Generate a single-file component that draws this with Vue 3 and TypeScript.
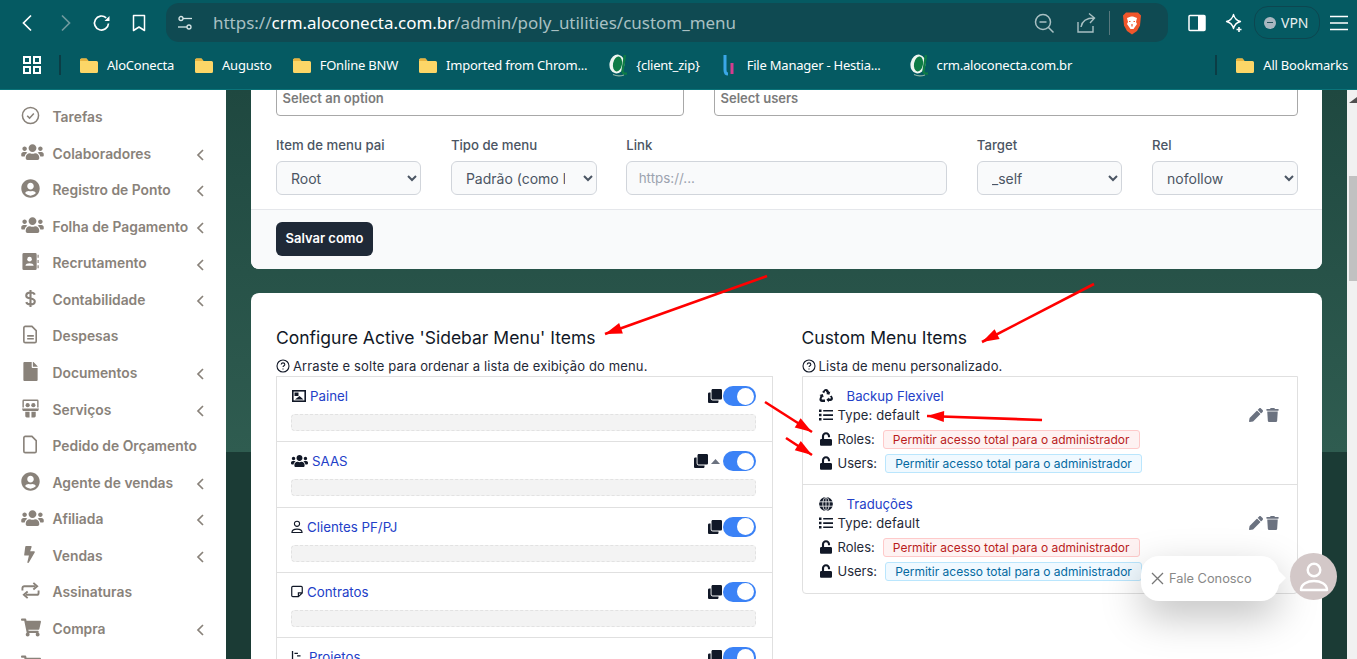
<script setup lang="ts">
type Nav = { label: string; icon: string; sub?: boolean };
const navItems: Nav[] = [
  { label: 'Tarefas', icon: 'check' },
  { label: 'Colaboradores', icon: 'users', sub: true },
  { label: 'Registro de Ponto', icon: 'ucircle', sub: true },
  { label: 'Folha de Pagamento', icon: 'users', sub: true },
  { label: 'Recrutamento', icon: 'abook', sub: true },
  { label: 'Contabilidade', icon: 'dollar', sub: true },
  { label: 'Despesas', icon: 'filealt' },
  { label: 'Documentos', icon: 'file', sub: true },
  { label: 'Serviços', icon: 'gift', sub: true },
  { label: 'Pedido de Orçamento', icon: 'fileo' },
  { label: 'Agente de vendas', icon: 'ucircle', sub: true },
  { label: 'Afiliada', icon: 'users', sub: true },
  { label: 'Vendas', icon: 'bolt', sub: true },
  { label: 'Assinaturas', icon: 'retweet' },
  { label: 'Compra', icon: 'cart', sub: true },
  { label: '', icon: 'cart' },
];

const P: Record<string, string> = {
  users: 'M96 224c35.3 0 64-28.7 64-64s-28.7-64-64-64-64 28.7-64 64 28.7 64 64 64zm448 0c35.3 0 64-28.7 64-64s-28.7-64-64-64-64 28.7-64 64 28.7 64 64 64zm32 32h-64c-17.6 0-33.5 7.1-45.1 18.6 40.3 22.1 68.9 62 75.1 109.4h66c17.7 0 32-14.3 32-32v-32c0-35.3-28.7-64-64-64zm-256 0c61.9 0 112-50.1 112-112S381.9 32 320 32 208 82.1 208 144s50.1 112 112 112zm76.8 32h-8.3c-20.8 10-43.9 16-68.5 16s-47.6-6-68.5-16h-8.3C179.6 288 128 339.6 128 403.2V432c0 26.5 21.5 48 48 48h288c26.5 0 48-21.5 48-48v-28.8c0-63.6-51.6-115.2-115.2-115.2zm-223.7-13.4C161.5 263.1 145.6 256 128 256H64c-35.3 0-64 28.7-64 64v32c0 17.7 14.3 32 32 32h65.9c6.3-47.4 34.9-87.3 75.2-109.4z',
  ucircle: 'M248 8C111 8 0 119 0 256s111 248 248 248 248-111 248-248S385 8 248 8zm0 96c48.6 0 88 39.4 88 88s-39.4 88-88 88-88-39.4-88-88 39.4-88 88-88zm0 344c-58.7 0-111.3-26.6-146.5-68.2 18.8-35.4 55.6-59.8 98.5-59.8 2.4 0 4.8.4 7.1 1.1 13 4.2 26.6 6.9 40.9 6.9 14.3 0 28-2.7 40.9-6.9 2.3-.7 4.7-1.1 7.1-1.1 42.9 0 79.7 24.4 98.5 59.8C359.3 421.4 306.7 448 248 448z',
  cart: 'M528.12 301.319l47.273-208C578.806 78.301 567.391 64 551.99 64H159.208l-9.166-44.81C147.758 8.021 137.93 0 126.529 0H24C10.745 0 0 10.745 0 24v16c0 13.255 10.745 24 24 24h69.883l70.248 343.435C147.325 417.1 136 435.222 136 456c0 30.928 25.072 56 56 56s56-25.072 56-56c0-15.674-6.447-29.835-16.824-40h209.647C430.447 426.165 424 440.326 424 456c0 30.928 25.072 56 56 56s56-25.072 56-56c0-22.172-12.888-41.332-31.579-50.405l5.517-24.276c3.413-15.018-8.002-29.319-23.403-29.319H218.117l-6.545-32h293.145c11.206 0 20.92-7.754 23.403-18.681z',
  bolt: 'M296 160H180.6l42.6-129.8C227.2 15 215.7 0 200 0H56C44 0 33.800 8.900 32.200 20.800l-32 240C-1.700 275.200 9.500 288 24 288h118.700L96.600 482.500c-3.600 15.200 8 29.500 23.300 29.500 8.400 0 16.400-4.400 20.800-12l176-304c9.300-15.900-2.200-36-20.700-36z',
  file: 'M224 136V0H24C10.700 0 0 10.700 0 24v464c0 13.300 10.700 24 24 24h336c13.300 0 24-10.700 24-24V160H248c-13.200 0-24-10.800-24-24zm160-14.100v6.100H256V0h6.100c6.400 0 12.500 2.500 17 7l97.900 98c4.500 4.500 7 10.600 7 16.900z',
  trash: 'M432 32H312l-9.400-18.700A24 24 0 0 0 281.100 0H166.800a23.720 23.720 0 0 0-21.400 13.300L136 32H16A16 16 0 0 0 0 48v32a16 16 0 0 0 16 16h416a16 16 0 0 0 16-16V48a16 16 0 0 0-16-16zM53.200 467a48 48 0 0 0 47.900 45h245.800a48 48 0 0 0 47.900-45L416 128H32z',
  pencil: 'M497.900 142.100l-46.100 46.100c-4.700 4.700-12.300 4.700-17 0l-111-111c-4.700-4.700-4.700-12.300 0-17l46.100-46.100c18.700-18.700 49.100-18.700 67.900 0l60.100 60.100c18.800 18.700 18.800 49.100 0 67.900zM284.200 99.800L21.600 362.400.4 483.900c-2.900 16.400 11.400 30.600 27.800 27.800l121.500-21.300 262.600-262.600c4.700-4.700 4.700-12.300 0-17l-111-111c-4.800-4.700-12.400-4.700-17.100 0z',
  unlock: 'M400 256H152V152.900c0-39.600 31.700-72.500 71.300-72.900 40-.4 72.700 32.100 72.700 72v16c0 13.300 10.700 24 24 24h32c13.300 0 24-10.700 24-24v-16C376 68 307.500-.3 223.500 0 139.500.3 72 69.500 72 153.500V256H48c-26.500 0-48 21.500-48 48v160c0 26.500 21.500 48 48 48h352c26.500 0 48-21.500 48-48V304c0-26.500-21.500-48-48-48z',
  clone: 'M464 0c26.510 0 48 21.490 48 48v288c0 26.510-21.490 48-48 48H176c-26.510 0-48-21.490-48-48V48c0-26.510 21.490-48 48-48h288M176 416c-44.112 0-80-35.888-80-80V128H48c-26.510 0-48 21.490-48 48v288c0 26.510 21.490 48 48 48h288c26.510 0 48-21.490 48-48v-48H176z',
};
const VB: Record<string, string> = {
  users: '0 0 640 512', ucircle: '0 0 496 512', cart: '0 0 576 512', bolt: '0 0 320 512', file: '0 0 384 512',
};

const folders = [
  { t: 'AloConecta', k: 'folder' },
  { t: 'Augusto', k: 'folder' },
  { t: 'FOnline BNW', k: 'folder' },
  { t: 'Imported from Chrom...', k: 'folder' },
  { t: '{client_zip}', k: 'alo' },
  { t: 'File Manager - Hestia...', k: 'hestia' },
  { t: 'crm.aloconecta.com.br', k: 'alo' },
];

const activeRows = [
  { t: 'Painel', i: 'image', extra: false },
  { t: 'SAAS', i: 'users', extra: true },
  { t: 'Clientes PF/PJ', i: 'user', extra: false },
  { t: 'Contratos', i: 'note', extra: false },
  { t: 'Projetos', i: 'tasks', extra: false },
];
const customRows = [
  { t: 'Backup Flexivel', i: 'recycle' },
  { t: 'Traduções', i: 'globe' },
];

const arrows = [
  [767, 276, 605, 334],
  [1094, 284, 982, 342],
  [765, 402, 812, 432],
  [786, 438, 812, 455],
  [1042, 420, 927, 416],
];
function head(a: number[]): string {
  const [x1, y1, x2, y2] = a;
  const d = Math.hypot(x2 - x1, y2 - y1);
  const ux = (x2 - x1) / d;
  const uy = (y2 - y1) / d;
  const bx = x2 - ux * 17;
  const by = y2 - uy * 17;
  return `${x2},${y2} ${bx - uy * 5.5},${by + ux * 5.5} ${bx + uy * 5.5},${by - ux * 5.5}`;
}
</script>

<template>
  <div class="window">
    <header class="chrome">
      <div class="toolbar">
        <button class="tb"><svg width="20" height="20" viewBox="0 0 20 20" fill="none" stroke="#fff" stroke-width="1.7"><path d="M13 2.500 5.500 10l7.500 7.500" /></svg></button>
        <button class="tb"><svg width="20" height="20" viewBox="0 0 20 20" fill="none" stroke="#6f9a9e" stroke-width="1.7"><path d="M7 2.500 14.500 10 7 17.500" /></svg></button>
        <button class="tb"><svg width="20" height="20" viewBox="0 0 20 20" fill="none" stroke="#fff" stroke-width="1.700"><path d="M16.500 10.500a7 7 0 1 1-2.300-5.700" /><path d="M17.500 3v5h-5z" fill="#fff" stroke="none" /></svg></button>
        <button class="tb"><svg width="20" height="20" viewBox="0 0 20 20" fill="none" stroke="#fff" stroke-width="1.500"><path d="M4.500 2.500h11v15L10 14l-5.500 3.500z" stroke-linejoin="round" /></svg></button>
        <div class="omni">
          <svg class="tune" width="18" height="18" viewBox="0 0 18 18" fill="none" stroke="#d7e6e7" stroke-width="1.300"><circle cx="5" cy="4.500" r="2" /><path d="M7 4.500h9" /><circle cx="13" cy="13" r="2" /><path d="M2 13h9" /></svg>
          <div class="url">https://<b>crm.aloconecta.com.br</b>/admin/poly_utilities/custom_menu</div>
          <svg width="22" height="22" viewBox="0 0 22 22" fill="none" stroke="#a9c0c3" stroke-width="1.500"><circle cx="10" cy="10" r="7.500" /><path d="M6.500 10h7M15.500 15.500l5 5" /></svg>
          <svg class="share" width="22" height="22" viewBox="0 0 22 22" fill="none" stroke="#a9c0c3" stroke-width="1.400"><path d="M3 10v10h15v-6M6 15c1-6 5-9 13-9M14 1.500 19.500 6 15 11" /></svg>
          <span class="osep"></span>
          <svg width="20" height="24" viewBox="0 0 20 24"><path d="M4 1.500h12l3 3-1 10-3 5.500-5 3.500L5 20l-3-5.500-1-10z" fill="#f0562b" /><path d="M5 7l4-1.500h2L15 7l-1 4 1 2-3.500 5h-3L5 13l1-2z" fill="#fff" /><path d="M8.500 10.500h-1.500M13 10.500h-1.500M10 13v2.500" stroke="#f0562b" stroke-width="1.200" /></svg>
        </div>
        <svg class="panel" width="20" height="20" viewBox="0 0 20 20"><rect x="2" y="2.500" width="16" height="15" rx="1" fill="none" stroke="#fff" stroke-width="1.500" /><rect x="11" y="3" width="7" height="14" fill="#fff" /></svg>
        <svg class="stars" width="22" height="22" viewBox="0 0 22 22" fill="none" stroke="#fff" stroke-width="1.300"><path d="M9.500 2.500c1 4 3 6 7 7-4 1-6 3-7 7-1-4-3-6-7-7 4-1 6-3 7-7z" stroke-linejoin="round" /><path d="M15 15v5M12.500 17.500h5" stroke-width="1.600" /></svg>
        <div class="vpn"><span class="vdot"><i></i></span>VPN</div>
        <svg class="burger" width="20" height="16" viewBox="0 0 20 16" fill="none" stroke="#fff" stroke-width="1.400"><path d="M1 1.500h18M1 8h18M1 14.500h18" /></svg>
      </div>
      <div class="bookmarks">
        <svg class="apps" width="18" height="18" viewBox="0 0 18 18" fill="none" stroke="#fff" stroke-width="2"><rect x="1" y="1" width="6" height="6" /><rect x="11" y="1" width="6" height="6" /><rect x="1" y="11" width="6" height="6" /><rect x="11" y="11" width="6" height="6" /></svg>
        <span class="bsep"></span>
        <div v-for="f in folders" :key="f.t" class="bm" :class="'k-' + f.k">
          <svg v-if="f.k === 'folder'" width="20" height="17" viewBox="0 0 20 17"><path d="M1 3a1.500 1.500 0 0 1 1.500-1.500h5L9.500 4h8A1.500 1.500 0 0 1 19 5.500v9a1.500 1.500 0 0 1-1.500 1.500h-15A1.500 1.500 0 0 1 1 14.500z" fill="#fcd667" /><path d="M1 3a1.500 1.500 0 0 1 1.500-1.500h5L9.500 4 H1z" fill="#e8b33f" /></svg>
          <svg v-else-if="f.k === 'alo'" width="20" height="24" viewBox="0 0 20 24" fill="none"><ellipse cx="9" cy="11" rx="7.500" ry="9.500" fill="#eef6f0" transform="rotate(10 9 11)" /><ellipse cx="9.500" cy="11" rx="4.500" ry="7.500" fill="#0e7c45" transform="rotate(10 9.500 11)" /><path d="M17 2 14.500 18c0 2 1.500 3 4.500 2.500" stroke="#0e7c45" stroke-width="2.400" /><path d="M5 21.500c3 1.500 8 1.500 11 .5" stroke="#8fb5a5" stroke-width="1.200" /></svg>
          <svg v-else width="14" height="22" viewBox="0 0 14 22" fill="none"><path d="M3 1v15c0 3 1 4 3 4" stroke="#3aa7e8" stroke-width="3" /><path d="M10 9v11" stroke="#d63c8e" stroke-width="3" /></svg>
          <span>{{ f.t }}</span>
        </div>
        <span class="bsep end"></span>
        <div class="bm">
          <svg width="20" height="17" viewBox="0 0 20 17"><path d="M1 3a1.500 1.500 0 0 1 1.500-1.500h5L9.500 4h8A1.500 1.500 0 0 1 19 5.500v9a1.500 1.500 0 0 1-1.500 1.500h-15A1.500 1.500 0 0 1 1 14.500z" fill="#fcd667" /><path d="M1 3a1.500 1.500 0 0 1 1.500-1.500h5L9.500 4 H1z" fill="#e8b33f" /></svg>
          <span>All Bookmarks</span>
        </div>
      </div>
    </header>

    <div class="page">
      <aside class="sidebar">
        <div v-for="(n, i) in navItems" :key="i" class="nav">
          <span class="nicon">
            <svg v-if="P[n.icon]" :viewBox="VB[n.icon]" class="nsvg" :class="'s-' + n.icon"><path :d="P[n.icon]" fill="currentColor" /></svg>
            <svg v-else-if="n.icon === 'check'" class="nsvg s-line" viewBox="0 0 20 20" fill="none" stroke="currentColor" stroke-width="1.600"><circle cx="10" cy="10" r="8.500" /><path d="M6.500 10.300 9 12.800l4.500-5" /></svg>
            <svg v-else-if="n.icon === 'abook'" class="nsvg s-line" viewBox="0 0 20 20"><path d="M3 1h12a1.500 1.500 0 0 1 1.500 1.500v15A1.500 1.500 0 0 1 15 19H3a1.500 1.500 0 0 1-1.500-1.500v-15A1.500 1.500 0 0 1 3 1z" fill="currentColor" /><circle cx="9" cy="7.500" r="2.400" fill="#fff" /><path d="M4.800 14c0-3 8.400-3 8.400 0v.5H4.800z" fill="#fff" /><path d="M18 3v3M18 8.500v3M18 14v3" stroke="currentColor" stroke-width="1.200" /></svg>
            <svg v-else-if="n.icon === 'dollar'" class="nsvg s-line" viewBox="0 0 20 20" fill="none" stroke="currentColor" stroke-width="2.200"><path d="M14.500 6c-.5-1.500-2-2.300-4.500-2.300S5.500 4.800 5.500 7s2 2.600 4.500 3 4.500 1 4.500 3.200-2 3.100-4.500 3.100-4-.9-4.500-2.400M10 1v18" /></svg>
            <svg v-else-if="n.icon === 'filealt'" class="nsvg s-line" viewBox="0 0 20 20" fill="none" stroke="currentColor" stroke-width="1.700"><path d="M4.500 1.500h7l4.500 4.500v11a1.500 1.500 0 0 1-1.500 1.500h-10A1.500 1.500 0 0 1 3 17V3a1.500 1.500 0 0 1 1.500-1.500z" /><path d="M6.500 11.500h7M6.500 14.500h7" /></svg>
            <svg v-else-if="n.icon === 'fileo'" class="nsvg s-line" viewBox="0 0 20 20" fill="none" stroke="currentColor" stroke-width="1.700"><path d="M4.500 1.500h7l4.500 4.500v11a1.500 1.500 0 0 1-1.500 1.500h-10A1.500 1.500 0 0 1 3 17V3a1.500 1.500 0 0 1 1.500-1.500z" /></svg>
            <svg v-else-if="n.icon === 'gift'" class="nsvg s-line" viewBox="0 0 20 20"><path d="M3 .5h14a1.500 1.500 0 0 1 1.500 1.500v7h-1.500V2H3v7H1.500V2A1.500 1.500 0 0 1 3 .5z" fill="currentColor" /><circle cx="7" cy="6.500" r="2.200" fill="currentColor" /><circle cx="13" cy="6.500" r="2.200" fill="currentColor" /><path d="M1 10h18l-1 2.500H2zM4.500 13.500h4.500v6H6a1.500 1.500 0 0 1-1.500-1.500zM11 13.500h4.500V18a1.500 1.500 0 0 1-1.500 1.500h-3z" fill="currentColor" /></svg>
            <svg v-else-if="n.icon === 'retweet'" class="nsvg s-line" viewBox="0 0 20 20" fill="none" stroke="currentColor" stroke-width="2"><path d="M1.500 10V7.500a2 2 0 0 1 2-2H15" /><path d="M13 2l4 3.500-4 3.500" /><path d="M18.500 10v2.500a2 2 0 0 1-2 2H5" /><path d="M7 11l-4 3.500L7 18" /></svg>
          </span>
          <span class="nlabel">{{ n.label }}</span>
          <svg v-if="n.sub" class="chev" width="8" height="12" viewBox="0 0 8 12" fill="none" stroke="currentColor" stroke-width="1.700"><path d="M7 1 2 6l5 5" /></svg>
        </div>
      </aside>

      <main class="main">
        <section class="card first">
          <div class="body">
            <div class="pair">
              <div class="multi">Select an option</div>
              <div class="multi">Select users</div>
            </div>
            <div class="fields">
              <label class="field"><span>Item de menu pai</span><select><option>Root</option></select></label>
              <label class="field"><span>Tipo de menu</span><select class="cut"><option>Padrão (como link)</option></select></label>
              <label class="field"><span>Link</span><input placeholder="https://..." /></label>
              <label class="field"><span>Target</span><select><option>_self</option></select></label>
              <label class="field"><span>Rel</span><select><option>nofollow</option></select></label>
            </div>
          </div>
          <div class="foot"><button class="save">Salvar como</button></div>
        </section>

        <section class="card second">
          <div class="cols">
            <div>
              <h2>Configure Active 'Sidebar Menu' Items</h2>
              <p class="note"><svg width="14" height="14" viewBox="0 0 14 14" fill="none" stroke="#111827" stroke-width="1.100"><circle cx="7" cy="7" r="6" /><path d="M5.200 5.500C5.300 4.400 6 3.900 7 3.900s1.800.6 1.800 1.500c0 1.300-1.800 1.300-1.800 2.700" /><path d="M7 9.400v1" /></svg>Arraste e solte para ordenar a lista de exibição do menu.</p>
              <div class="list">
                <div v-for="r in activeRows" :key="r.t" class="arow">
                  <div class="ahead">
                    <span class="title">
                      <svg v-if="r.i === 'image'" class="tight-r" width="14" height="12" viewBox="0 0 14 12"><rect x=".8" y=".8" width="12.400" height="10.400" fill="none" stroke="#111827" stroke-width="1.600" /><path d="M2.500 2.500h4v3.500h-4zM3 9.500 7.500 6l4 3.500z" fill="#111827" /></svg>
                      <svg v-else-if="r.i === 'users'" width="17" height="14" viewBox="0 0 640 512" class="tight-i"><path :d="P.users" fill="#111827" /></svg>
                      <svg v-else-if="r.i === 'user'" width="12" height="14" viewBox="0 0 13 14" fill="none" stroke="#111827" stroke-width="1.200" class="tight-i"><circle cx="6.500" cy="3.500" r="2.800" /><path d="M1 13c0-5 11-5 11 0z" /></svg>
                      <svg v-else-if="r.i === 'note'" width="12" height="13" viewBox="0 0 13 13" fill="none" stroke="#111827" stroke-width="1.300" class="tight-i"><path d="M2 1h9a1.200 1.200 0 0 1 1.200 1.200V8L8 12H2A1.200 1.200 0 0 1 .8 10.800V2.200A1.200 1.200 0 0 1 2 1zM8 12V8h4" /></svg>
                      <svg v-else width="13" height="14" viewBox="0 0 15 14" fill="#111827" class="tight-l"><path d="M1 0h1.500v12H13v1.500H1zM4 2h4v1.500H4zM7 5h4v1.500H7z" /></svg>
                      <a>{{ r.t }}</a>
                    </span>
                    <span class="tools">
                      <svg width="14" height="14" viewBox="0 0 512 512"><path :d="P.clone" fill="#111827" /></svg>
                      <svg v-if="r.extra" class="caret" width="9" height="5" viewBox="0 0 9 5"><path d="M4.500 0 9 5H0z" fill="#6b7280" /></svg>
                      <span class="toggle"><i></i></span>
                    </span>
                  </div>
                  <div class="drop"></div>
                </div>
              </div>
            </div>
            <div>
              <h2>Custom Menu Items</h2>
              <p class="note"><svg width="14" height="14" viewBox="0 0 14 14" fill="none" stroke="#111827" stroke-width="1.100"><circle cx="7" cy="7" r="6" /><path d="M5.200 5.500C5.300 4.400 6 3.900 7 3.900s1.800.6 1.800 1.500c0 1.300-1.800 1.300-1.800 2.700" /><path d="M7 9.400v1" /></svg><span>Lista de menu personalizado.</span></p>
              <div class="list custom">
                <div v-for="r in customRows" :key="r.t" class="crow">
                  <div class="cmain">
                    <div class="ctitle">
                      <svg v-if="r.i === 'recycle'" width="14" height="14" viewBox="0 0 14 14" fill="#111827"><path d="M4.800 1.200C5.300.4 6 0 7 0s1.700.4 2.200 1.200l1.100 1.900 1-.6-.9 3.300-3.300-.9 1-.6-1.100-1.900c-.3-.6-.7-.6-1 0L5.200 4.300 3.100 3z" /><path d="M12.600 6.500l1 1.800c.9 1.700-.2 3.700-2.200 3.700H9.800v1.200L7.400 10.800l2.400-2.400v1.200h1.600c.5 0 .8-.5.500-1L10.600 7.700z" /><path d="M1.500 6.700.5 5.900l3.300-.9.900 3.300-1-.6-1 1.700c-.3.500 0 1.100.6 1.100H6v2.400H3c-2 0-3.200-2.100-2.200-3.800z" /></svg>
                      <svg v-else width="14" height="14" viewBox="0 0 14 14" fill="#111827"><circle cx="7" cy="7" r="6.900" /><path d="M0 4.800h14M0 9.200h14M7 0v14" stroke="#fff" stroke-width=".8" /><ellipse cx="7" cy="7" rx="3.200" ry="6.900" fill="none" stroke="#fff" stroke-width=".8" /></svg>
                      <a>{{ r.t }}</a>
                    </div>
                    <div class="cline type">
                      <svg width="14" height="12" viewBox="0 0 14 12" fill="#111827"><path d="M0 .5h2.500V3H0zM0 4.800h2.500v2.500H0zM0 9h2.500v2.500H0zM4.200 1h9.800v1.600H4.200zM4.200 5.300h9.800v1.600H4.200zM4.200 9.500h9.800v1.600H4.200z" /></svg>
                      <span>Type: default</span>
                    </div>
                    <div class="cline">
                      <svg class="lock" width="12" height="14" viewBox="0 0 448 512"><path :d="P.unlock" fill="#111827" /></svg>
                      <span>Roles:</span><em class="badge red">Permitir acesso total para o administrador</em>
                    </div>
                    <div class="cline">
                      <svg class="lock" width="12" height="14" viewBox="0 0 448 512"><path :d="P.unlock" fill="#111827" /></svg>
                      <span>Users:</span><em class="badge blue">Permitir acesso total para o administrador</em>
                    </div>
                  </div>
                  <div class="acts">
                    <svg width="14" height="14" viewBox="0 0 512 512"><path :d="P.pencil" fill="#6b7280" /></svg>
                    <svg width="13" height="14" viewBox="0 0 448 512"><path :d="P.trash" fill="#6b7280" /></svg>
                  </div>
                </div>
              </div>
            </div>
          </div>
        </section>
      </main>

      <div class="scrollbar">
        <svg width="8" height="6" viewBox="0 0 8 6"><path d="M8 0v6H0z" fill="#505050" /></svg>
        <span class="thumb"></span>
      </div>

      <div class="chat">
        <div class="pill">
          <svg width="13" height="13" viewBox="0 0 13 13" fill="none" stroke="#777" stroke-width="1.300"><path d="M1 1l11 11M12 1 1 12" /></svg>
          <span>Fale Conosco</span>
        </div>
        <span class="tip"></span>
        <div class="avatar">
          <svg width="30" height="32" viewBox="0 0 30 32" fill="none" stroke="#fff" stroke-width="2.400"><circle cx="15" cy="9" r="6.300" /><path d="M2 29c0-12 26-12 26 0z" stroke-linejoin="round" /></svg>
        </div>
      </div>
    </div>

    <svg class="marks" width="1357" height="659" viewBox="0 0 1357 659">
      <g v-for="(a, i) in arrows" :key="i">
        <line :x1="a[0]" :y1="a[1]" :x2="a[2]" :y2="a[3]" stroke="#f00" stroke-width="2.600" />
        <polygon :points="head(a)" fill="#f00" />
      </g>
    </svg>
  </div>
</template>

<style>
html, body { margin: 0; padding: 0; overflow: hidden; }
</style>

<style scoped>
.window { position: relative; width: 1357px; height: 659px; overflow: hidden; display: flex; flex-direction: column; font-family: Inter, "Liberation Sans", sans-serif; background: #fff; }
.chrome { height: 90px; flex: none; background: #055a62; border-bottom: 1px solid #0a7379; box-sizing: border-box; font-family: "Noto Sans", "Open Sans", sans-serif; color: #fff; }
.toolbar { height: 45px; display: flex; align-items: center; padding-left: 9px; }
.tb { width: 37px; height: 37px; background: none; border: 0; padding: 0; display: flex; align-items: center; justify-content: center; }
.omni { width: 1002px; height: 39px; margin-left: 9px; border-radius: 13px; background: #0f4a52; display: flex; align-items: center; padding: 0 26px 0 10px; box-sizing: border-box; }
.tune { margin-right: 19px; }
.url { flex: 1; font-size: 16.980px; color: #a9c0c3; white-space: nowrap; }
.url b { font-weight: 400; color: #fff; }
.share { margin-left: 20px; }
.osep { width: 1px; height: 24px; background: #58787d; margin: 0 12px; }
.panel { margin-left: 19px; }
.stars { margin-left: 17px; }
.vpn { margin-left: 8px; width: 66px; height: 33px; box-sizing: border-box; border: 1px solid #0d4650; border-radius: 14px; display: flex; align-items: center; gap: 5px; padding-left: 9px; font-size: 14px; color: #e8f0f0; }
.vdot { width: 12px; height: 12px; border-radius: 50%; background: #a9b7c0; display: flex; align-items: center; justify-content: center; }
.vdot i { width: 6px; height: 1.500px; background: #22525a; }
.burger { margin-left: 9px; }
.bookmarks { height: 40px; display: flex; align-items: center; padding-left: 23px; font-size: 13px; }
.apps { flex: none; }
.bsep { width: 2px; height: 20px; background: #0b3d45; margin: 0 18px; flex: none; }
.bsep.end { margin: 0 18px 0 auto; }
.bm { display: flex; align-items: center; gap: 8px; margin-right: 20px; letter-spacing: -.22px; white-space: nowrap; color: #fff; }
.bm:last-child { margin-right: 9px; }
.k-alo { margin-left: 1px; }
.k-hestia { margin-left: 2px; margin-right: 27px; gap: 11px; }

.page { position: relative; flex: 1; display: flex; min-height: 0; }
.sidebar { width: 226px; flex: none; overflow: hidden; background: #fff; padding-top: 8.800px; box-sizing: border-box; }
.nav { height: 36.570px; display: flex; align-items: center; padding: 0 21px; color: #89827a; position: relative; font-size: 13.850px; font-weight: 600; }
.nicon { width: 31.500px; flex: none; display: flex; margin-top: -3px; }
.nsvg { height: 19px; width: 19px; }
.s-users { width: 23px; height: 18px; }
.s-cart { width: 20px; height: 19px; }
.s-bolt { height: 17px; width: 17px; }
.s-file { height: 19px; width: 15px; margin-left: 2px; }
.nlabel { white-space: nowrap; }
.chev { position: absolute; left: 196px; top: 13.500px; }

.main { flex: 1; min-width: 0; padding: 0 25px; overflow: hidden; background: linear-gradient(#1f4840 0, #2f5c50 362px, #1b3b35 362px); }
.card { background: #fff; border-radius: 8px; box-sizing: border-box; }
.first { border-radius: 0 0 8px 8px; overflow: hidden; }
.body { padding: 0 24px 14px 25px; }
.pair { display: grid; grid-template-columns: 408px 584px; gap: 30px; margin-bottom: 20px; }
.multi { height: 36px; margin-top: -10px; border: 1px solid #a8a8a8; border-radius: 4px; box-sizing: border-box; padding: 8.500px 5.500px 0; font-size: 13px; line-height: 16px; font-weight: 600; color: #7b7b7b; }
.fields { display: grid; grid-template-columns: 145.300px 145.700px 321px 145.700px 145.700px; gap: 29.600px; }
.field { display: flex; flex-direction: column; gap: 7px; min-width: 0; }
.field span { font-size: 13.200px; line-height: 18px; font-weight: 500; color: #4b5563; }
select, input { width: 100%; height: 34px; box-sizing: border-box; border: 1px solid #d1d5db; border-radius: 6px; background: #f9fafb; font: 400 14px Inter, sans-serif; color: #4b5563; padding: 0 4px 0 10px; outline: 0; }
select.cut { padding-right: 15px; }
input { font-size: 13.400px; padding-left: 11.500px; }
input::placeholder { color: #9ca3af; }
.foot { height: 60px; box-sizing: border-box; border-top: 1px solid #e5e7eb; background: #f9fafb; padding: 12px 25px; }
.save { width: 97px; height: 34px; border: 0; border-radius: 6px; background: #1f2937; color: #fff; font: 600 13px Inter, sans-serif; padding: 0 0 2px; }
.second { margin-top: 24px; padding: 34px 24px 0 25px; min-height: 400px; }
.cols { display: grid; grid-template-columns: 1fr 1fr; gap: 29px; }
h2 { margin: 0; font-size: 17.500px; line-height: 22px; font-weight: 400; color: #111827; }
.note { margin: 8px 0 1px; height: 18px; display: flex; align-items: center; gap: 3px; font-size: 13px; letter-spacing: .135px; color: #1f2937; white-space: nowrap; }
.list { border: 1px solid #e0e0e0; box-sizing: border-box; }
.arow { height: 65.250px; box-sizing: border-box; padding: 9px 16px 0 14px; border-bottom: 1px solid #e0e0e0; }
.ahead { height: 20px; display: flex; justify-content: space-between; align-items: center; }
.title { display: flex; align-items: center; gap: 5px; font-size: 13.300px; padding-left: 1px; }
.tight-i { margin: 0 -1px; }
.tight-l { margin-left: -1px; }
.tight-r { margin-right: -1px; }
a { color: #2340c8; }
.tools { display: flex; align-items: center; gap: 1px; }
.caret { margin: 0 2px; }
.toggle { width: 33px; height: 20px; border-radius: 10px; background: #3b82f6; position: relative; }
.toggle i { position: absolute; right: 1.500px; top: 1.500px; width: 17px; height: 17px; border-radius: 50%; background: #fff; }
.drop { height: 17px; margin-top: 8px; box-sizing: border-box; border: 1px dashed #e2e2e2; border-radius: 4px; background: #f3f3f3; }
.custom { border-radius: 0 0 4px 4px; }
.crow { position: relative; height: 108px; padding: 10px 16px 0; box-sizing: border-box; border-bottom: 1px solid #e0e0e0; font-size: 13px; color: #1f2937; }
.crow:last-child { border-bottom: 0; }
.ctitle { display: flex; align-items: center; height: 18px; gap: 15px; font-size: 13.200px; }
.ctitle svg { flex: none; }
.ctitle a { margin-left: -1px; }
.cline { display: flex; align-items: center; height: 24px; gap: 6px; }
.cline.type { height: 20px; margin-bottom: 2px; gap: 5px; letter-spacing: .15px; }
.cline svg { flex: none; }
.cline .lock { margin-left: 1px; }
.cline span { flex: none; }
.badge { font-style: normal; font-size: 12px; height: 19px; line-height: 17px; box-sizing: border-box; padding: 0 9px; border-radius: 3px; border: 1px solid; margin-left: 2px; white-space: nowrap; }
.red { color: #b91c1c; background: #fef2f2; border-color: #fecaca; }
.blue { color: #0369a1; background: #f0f9ff; border-color: #bae6fd; }
.acts { position: absolute; left: 446px; top: 31px; display: flex; align-items: center; gap: 3px; }
.scrollbar { width: 10px; flex: none; background: #f1f1f1; display: flex; flex-direction: column; align-items: flex-end; padding-top: 7px; box-sizing: border-box; }
.thumb { width: 8px; height: 105px; background: #c1c1c1; margin-top: 73px; }
.chat { position: absolute; left: 1141px; top: 463px; display: flex; align-items: flex-start; }
.pill { width: 138px; height: 45px; margin-top: 3px; background: #fff; border-radius: 18px; box-shadow: 0 15px 40px rgba(0,0,0,.25); display: flex; align-items: center; gap: 5px; padding-left: 10px; box-sizing: border-box; font-size: 12.800px; color: #888; }
.tip { width: 0; height: 0; margin-top: 17px; border-left: 8px solid #fff; border-top: 8px solid transparent; border-bottom: 8px solid transparent; margin-left: -1px; }
.avatar { width: 47px; height: 47px; border-radius: 50%; background: #d3c8c8; margin-left: 4px; display: flex; align-items: center; justify-content: center; }
.marks { position: absolute; left: 0; top: 0; pointer-events: none; }
</style>
